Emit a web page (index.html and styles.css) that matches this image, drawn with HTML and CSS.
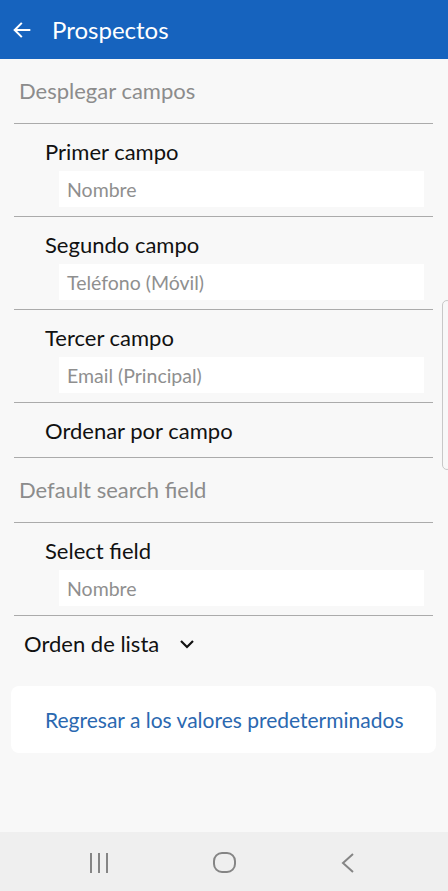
FILE: index.html
```html
<!DOCTYPE html>
<html lang="es">
<head>
<meta charset="utf-8">
<title>Prospectos</title>
<link rel="stylesheet" href="styles.css">
</head>
<body>
<div class="screen">
  <header class="appbar">
    <svg class="back" width="22" height="22" viewBox="0 0 24 24"><path d="M20 12H5M11 5l-7 7 7 7" fill="none" stroke="#fff" stroke-width="2.2" stroke-linecap="square"/></svg>
    <h1 class="title">Prospectos</h1>
  </header>
  <main class="content">
    <div class="list">
      <div class="section">Desplegar campos</div>
      <div class="item">
        <div class="label">Primer campo</div>
        <div class="input">Nombre</div>
      </div>
      <div class="item">
        <div class="label">Segundo campo</div>
        <div class="input">Teléfono (Móvil)</div>
      </div>
      <div class="item">
        <div class="label">Tercer campo</div>
        <div class="input">Email (Principal)</div>
      </div>
      <div class="item single">
        <div class="label">Ordenar por campo</div>
      </div>
      <div class="section">Default search field</div>
      <div class="item">
        <div class="label">Select field</div>
        <div class="input">Nombre</div>
      </div>
    </div>
    <div class="order">
      <span>Orden de lista</span>
      <svg class="chev" width="16" height="16" viewBox="0 0 16 16"><path d="M2 5l6 6 6-6" fill="none" stroke="#111" stroke-width="2.2"/></svg>
    </div>
    <div class="card">Regresar a los valores predeterminados</div>
    <div class="scrollthumb"></div>
  </main>
  <nav class="navbar">
    <svg width="20" height="20" viewBox="0 0 20 20"><path d="M2 0v20M10 0v20M18 0v20" stroke="#858585" stroke-width="2" fill="none"/></svg>
    <svg width="23" height="21" viewBox="0 0 23 21"><rect x="1" y="1" width="21" height="19" rx="8" fill="none" stroke="#858585" stroke-width="2"/></svg>
    <svg width="15" height="20" viewBox="0 0 15 20"><path d="M13 1L3 10l10 9" stroke="#858585" stroke-width="2" fill="none"/></svg>
  </nav>
</div>
</body>
</html>
```

FILE: styles.css
```css
* { box-sizing: border-box; }
html, body { margin: 0; padding: 0; }
body {
  font-family: Lato, "Open Sans", "Liberation Sans", sans-serif;
  background: #f8f8f8;
}
.screen {
  width: 448px;
  height: 891px;
  display: flex;
  flex-direction: column;
  overflow: hidden;
}
.appbar {
  height: 59px;
  flex: none;
  background: #1663be;
  display: flex;
  align-items: center;
  padding-left: 11px;
  gap: 19px;
}
.back { display: block; }
.title {
  margin: 0;
  color: #fff;
  font-weight: 400;
  font-size: 24px;
}
.content {
  flex: 1;
  position: relative;
  background: #f8f8f8;
}
.list {
  margin: 0 15px 0 14px;
}
.section {
  padding: 20px 0 20px 5px;
  line-height: 24px;
  font-size: 22px;
  color: #8c8c8c;
  border-bottom: 1px solid #ababab;
}
.item {
  padding: 15px 9px 9px 31px;
  border-bottom: 1px solid #ababab;
}
.item.single { padding-bottom: 13px; }
.label {
  font-size: 22px;
  line-height: 26px;
  color: #111;
}
.input {
  margin: 6px 0 0 14px;
  height: 36px;
  background: #fff;
  display: flex;
  align-items: center;
  padding-left: 8px;
  font-size: 19.5px;
  color: #8f8f8f;
}
.order {
  display: flex;
  align-items: center;
  gap: 20px;
  padding: 15px 0 0 24px;
  font-size: 22px;
  line-height: 26px;
  color: #111;
}
.chev { display: block; }
.card {
  margin: 29px 12px 0 11px;
  height: 67px;
  background: #fff;
  border-radius: 8px;
  display: flex;
  align-items: center;
  padding-left: 34px;
  font-size: 21px;
  color: #2a68b0;
}
.scrollthumb {
  position: absolute;
  right: -4px;
  top: 241px;
  width: 10px;
  height: 170px;
  border: 1px solid #c8c8c8;
  border-radius: 5px;
}
.navbar {
  height: 59px;
  flex: none;
  background: #efefef;
  display: flex;
  align-items: center;
  justify-content: space-between;
  padding: 2px 93px 0 89px;
}
.navbar svg { display: block; }
```
